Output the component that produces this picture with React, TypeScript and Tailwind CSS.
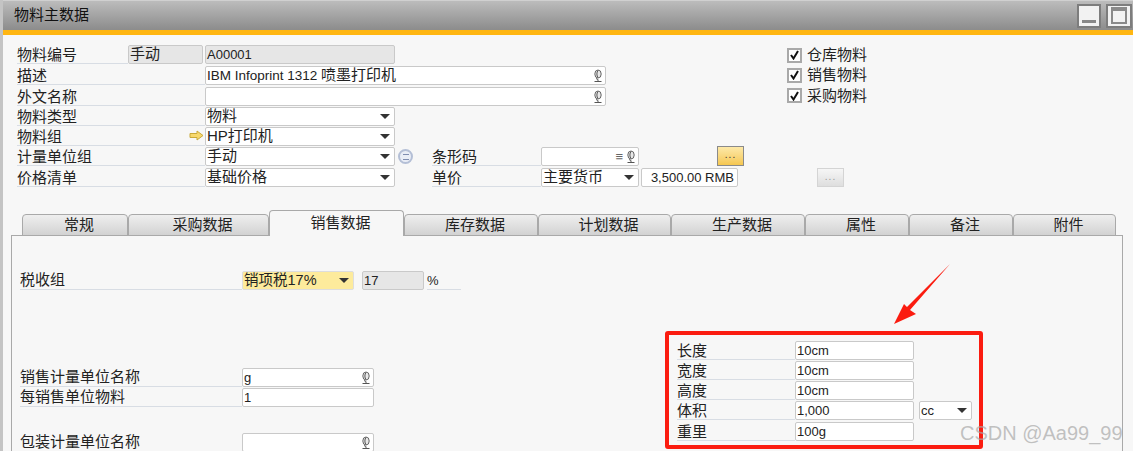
import type { ReactNode } from "react";

const FONT = "font-['Liberation_Sans','Noto_Sans_CJK_SC',sans-serif]";

// little globe on a stand, SAP's translate marker
const GlobeIcon = () => (
  <svg width="9" height="14" viewBox="0 0 9 14" className="shrink-0">
    <ellipse cx="5" cy="5" rx="3.2" ry="4" fill="#e8e8e8" stroke="#666" strokeWidth="1" />
    <path d="M5 1.5C3.5 3 3.5 7 5 8.5M3 9.5L5 10.5V12.5M1.5 12.5h7" stroke="#555" strokeWidth="1" fill="none" />
  </svg>
);

const CaretIcon = () => (
  <svg width="10" height="5" viewBox="0 0 10 5" className="shrink-0">
    <path d="M0 0h10L5 5z" fill="#333" />
  </svg>
);

const Label = ({ children, className = "w-[188px]" }: { children?: ReactNode; className?: string }) => (
  <div className={`h-[19px] shrink-0 border-b border-[#d8dde4] leading-[19px] text-[15px] text-[#222] ${className}`}>
    {children}
  </div>
);

const Field = ({
  children,
  className = "",
  globe = false,
  caret = false,
}: {
  children?: ReactNode;
  className?: string;
  globe?: boolean;
  caret?: boolean;
}) => (
  <div
    className={`flex h-[19px] shrink-0 items-center justify-between overflow-hidden whitespace-nowrap rounded-[2px] border border-[#c9c9c9] bg-white pl-[1px] pr-[3px] text-[13px] text-[#222] ${className}`}
  >
    <span>{children}</span>
    {globe && <GlobeIcon />}
    {caret && (
      <span className="pr-[1px]">
        <CaretIcon />
      </span>
    )}
  </div>
);

const Row = ({ children, className = "h-[20px]" }: { children: ReactNode; className?: string }) => (
  <div className={`flex items-start ${className}`}>{children}</div>
);

const Check = ({ label }: { label: string }) => (
  <div className="flex h-[20.3px] items-center gap-[5px] text-[15px] text-[#222]">
    <span className="flex h-[15px] w-[15px] items-center justify-center border-2 border-[#a9a9a9] bg-white">
      <svg width="9" height="10" viewBox="0 0 9 10">
        <path d="M1 5l2.5 3.5L8 1" stroke="#111" strokeWidth="2" fill="none" />
      </svg>
    </span>
    {label}
  </div>
);

const tabs = [
  { name: "常规", width: "w-[106px]" },
  { name: "采购数据", width: "w-[141px]" },
  { name: "销售数据", width: "w-[135px]", active: true },
  { name: "库存数据", width: "w-[134px]" },
  { name: "计划数据", width: "w-[133px]" },
  { name: "生产数据", width: "w-[134px]" },
  { name: "属性", width: "w-[104px]" },
  { name: "备注", width: "w-[104px]" },
  { name: "附件", width: "w-[103px]" },
];

const sizeRows = [
  { label: "长度", value: "10cm", height: "h-[20px]" },
  { label: "宽度", value: "10cm", height: "h-[20px]" },
  { label: "高度", value: "10cm", height: "h-[20px]" },
  { label: "体积", value: "1,000", unit: true, height: "h-[21px]" },
  { label: "重里", value: "100g", height: "h-[20px]" },
];

export default function App() {
  return (
    <div className={`relative h-[451px] w-[1133px] overflow-hidden border-l-[3px] border-[#c4c4c4] bg-[#f7f7f7] ${FONT}`}>
      <div className="flex h-[30px] items-center justify-between border-t border-[#d0d0d0] bg-gradient-to-b from-[#bcbcbc] to-[#8c8c8c] pl-[11px] pr-[1px]">
        <span className="text-[15px] text-[#111]">物料主数据</span>
        <div className="flex gap-[5px]">
          <button className="flex h-[24px] w-[24px] items-end justify-center border-2 border-[#7d7d7d] bg-[#f2f2f2] pb-[3px]">
            <span className="h-[3px] w-[14px] bg-[#888]" />
          </button>
          <button className="flex h-[24px] w-[26px] items-center justify-center border-2 border-[#7d7d7d] bg-[#f2f2f2]">
            <span className="h-[17px] w-[16px] border-2 border-t-[4px] border-[#8a8a8a]" />
          </button>
        </div>
      </div>
      <div className="h-[5px] bg-[#ffb612]" />

      <div className="pl-[14px] pt-[10px]">
        <div className="flex">
          <div className="w-[770px]">
            <Row className="h-[21px]">
              <Label className="w-[111px]">物料编号</Label>
              <Field className="mr-[2px] w-[75px] !bg-[#e6e6e6] !text-[15px]">手动</Field>
              <Field className="w-[190px] !bg-[#e6e6e6]">A00001</Field>
            </Row>
            <Row className="h-[21px]">
              <Label>描述</Label>
              <Field className="w-[401px] !text-[13.5px]" globe>
                IBM Infoprint 1312 <span className="text-[15px]">喷墨打印机</span>
              </Field>
            </Row>
            <Row>
              <Label>外文名称</Label>
              <Field className="w-[401px]" globe />
            </Row>
          </div>
          <div>
            <Check label="仓库物料" />
            <Check label="销售物料" />
            <Check label="采购物料" />
          </div>
        </div>

        <Row>
          <Label>物料类型</Label>
          <Field className="w-[190px] !text-[15px]" caret>
            物料
          </Field>
        </Row>
        <Row>
          <Label className="relative w-[188px]">
            物料组
            <svg width="15" height="11" viewBox="0 0 15 11" className="absolute right-[1px] top-[3px]">
              <path d="M1 3.5h7V1l6 4.5L8 10V7.5H1z" fill="#f7d86c" stroke="#c9a93a" />
            </svg>
          </Label>
          <Field className="w-[190px] !text-[15px]" caret>
            HP打印机
          </Field>
        </Row>
        <Row className="h-[21px]">
          <Label>计量单位组</Label>
          <Field className="w-[190px] !text-[15px]" caret>
            手动
          </Field>
          <span className="ml-[3px] mt-[2px] flex h-[15px] w-[15px] shrink-0 items-center justify-center rounded-full border-2 border-[#b4bfd6] bg-[#e9edf6]">
            <span className="h-[6px] w-[6px] border-y border-[#7f8db0]" />
          </span>
          <Label className="ml-[19px] w-[109px]">条形码</Label>
          <Field className="w-[98px] justify-end" globe>
            <span className="mr-[3px] text-[#666]">≡</span>
          </Field>
          <button className="ml-[78px] mt-[-1px] flex h-[20px] w-[27px] items-end justify-center border border-[#8a8a8a] bg-gradient-to-b from-[#fde9a8] to-[#f5c74f] pb-[5px] text-[10px] leading-none tracking-[1px] text-[#333]">
            ...
          </button>
        </Row>
        <Row>
          <Label>价格清单</Label>
          <Field className="w-[190px] !text-[15px]" caret>
            基础价格
          </Field>
          <Label className="ml-[37px] w-[109px]">单价</Label>
          <Field className="w-[98px] !text-[15px]" caret>
            主要货币
          </Field>
          <Field className="ml-[2px] w-[97px] justify-end">3,500.00 RMB</Field>
          <button className="ml-[79px] flex h-[19px] w-[27px] items-end justify-center border border-[#d4d4d4] bg-gradient-to-b from-[#f6f6f6] to-[#dedede] pb-[4px] text-[10px] leading-none tracking-[1px] text-[#999]">
            ...
          </button>
        </Row>
      </div>

      <div className="ml-[8px] mr-[8px] mt-[23px] w-[1112px]">
        <div className="relative z-10 flex h-[25px] items-end pl-[11px]">
          {tabs.map((tab) => (
            <div
              key={tab.name}
              className={`flex items-center justify-center rounded-t-[4px] border border-[#a9a9a9] pl-[8px] text-[15px] text-[#222] ${tab.width} ${
                tab.active
                  ? "h-[26px] border-b-0 bg-[#f7f7f7]"
                  : "h-[22px] bg-gradient-to-b from-[#efefef] to-[#d2d2d2]"
              }`}
            >
              {tab.name}
            </div>
          ))}
        </div>

        <div className="mt-[-1px] flex h-[220px] border border-[#a9a9a9] pl-[8px]">
          <div className="w-[645px] pt-[35px]">
            <div className="flex items-start">
              <Label className="w-[222px] !leading-[17px]">税收组</Label>
              <Field className="w-[112px] !border-[#ddd] !bg-[#fdeb9c] !text-[14.5px]" caret>
                销项税17%
              </Field>
              <Field className="ml-[8px] w-[62px] !bg-[#e6e6e6]">17</Field>
              <Label className="ml-[3px] w-[34px] !text-[13px]">%</Label>
            </div>
            <div className="mt-[78px] flex items-start">
              <Label className="w-[222px] !leading-[17px]">销售计量单位名称</Label>
              <Field className="w-[132px]" globe>
                g
              </Field>
            </div>
            <div className="mt-[1px] flex items-start">
              <Label className="w-[222px] !leading-[17px]">每销售单位物料</Label>
              <Field className="w-[132px]">1</Field>
            </div>
            <div className="mt-[26px] flex items-start">
              <Label className="w-[222px] !leading-[17px]">包装计量单位名称</Label>
              <Field className="w-[132px]" globe />
            </div>
          </div>

          <div className="mt-[95px] h-[118px] w-[318px] shrink-0 rounded-[3px] border-4 border-[#fb1c10] pl-[8px] pt-[6px]">
            {sizeRows.map((row) => (
              <div key={row.label} className={`flex items-start ${row.height}`}>
                <Label className="w-[118px]">{row.label}</Label>
                <Field className="w-[119px]">{row.value}</Field>
                {row.unit && (
                  <Field className="ml-[5px] w-[53px]" caret>
                    cc
                  </Field>
                )}
              </div>
            ))}
          </div>
        </div>
      </div>

      {/* annotation arrow drawn over the form */}
      <svg width="70" height="70" viewBox="0 0 70 70" className="absolute left-[888px] top-[261px]">
        <path d="M59 3L19 49l6 4L3 63l10-20 3 3z" fill="#fb1c10" />
      </svg>

      <span className="absolute left-[957px] top-[418px] whitespace-nowrap font-['Liberation_Sans'] text-[20px] text-[#a8a8a8]/70">
        CSDN @Aa99_99
      </span>
    </div>
  );
}
